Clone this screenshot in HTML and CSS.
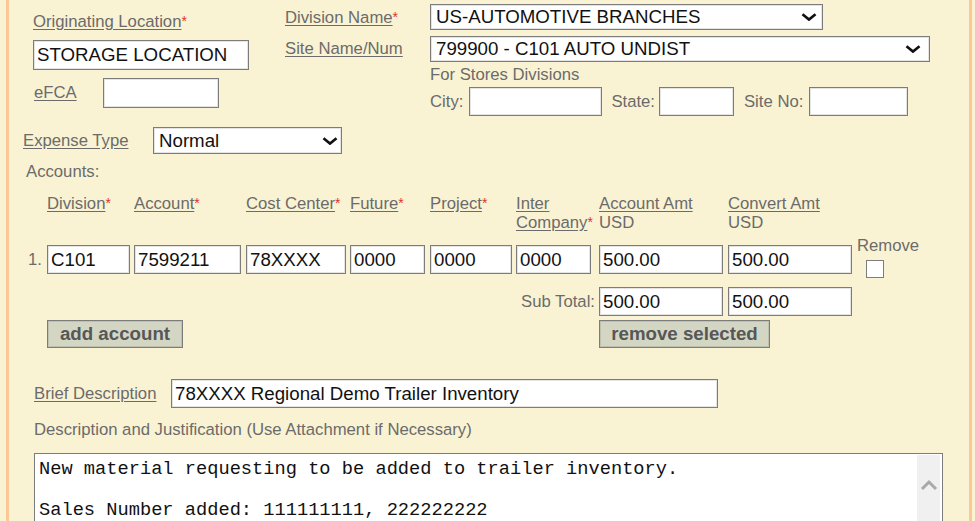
FILE: index.html
```html
<!DOCTYPE html>
<html>
<head>
<meta charset="utf-8">
<title>Request Form</title>
<link rel="stylesheet" href="styles.css">
</head>
<body>
<div class="page">
  <div class="top">
    <div class="left">
      <div class="lbl-line"><span class="lbl">Originating Location</span><span class="req">*</span></div>
      <input class="inp origin" type="text" value="STORAGE LOCATION">
      <div class="efca-row">
        <span class="lbl efca-lbl">eFCA</span>
        <input class="inp efca" type="text" value="">
      </div>
    </div>
    <div class="right">
      <div class="rgrid">
        <div class="lbl-line"><span class="lbl">Division Name</span><span class="req">*</span></div>
        <div class="select sel-div"><span>US-AUTOMOTIVE BRANCHES</span><svg class="chev" width="16" height="8" viewBox="0 0 16 8"><path d="M1.5 1.2 L8 6.6 L14.5 1.2" fill="none" stroke="#111" stroke-width="2.6"/></svg></div>
        <div class="lbl-line"><span class="lbl">Site Name/Num</span></div>
        <div class="select sel-site"><span>799900 - C101 AUTO UNDIST</span><svg class="chev" width="16" height="8" viewBox="0 0 16 8"><path d="M1.5 1.2 L8 6.6 L14.5 1.2" fill="none" stroke="#111" stroke-width="2.6"/></svg></div>
      </div>
      <div class="stores">
        <div class="plain-line">For Stores Divisions</div>
        <div class="city-row">
          <span class="txt city-l">City:</span><input class="inp city" type="text" value="">
          <span class="txt state-l">State:</span><input class="inp state" type="text" value="">
          <span class="txt site-l">Site No:</span><input class="inp siteno" type="text" value="">
        </div>
      </div>
    </div>
  </div>

  <div class="expense">
    <span class="lbl exp-lbl">Expense Type</span>
    <div class="select sel-exp"><span>Normal</span><svg class="chev" width="16" height="8" viewBox="0 0 16 8"><path d="M1.5 1.2 L8 6.6 L14.5 1.2" fill="none" stroke="#111" stroke-width="2.6"/></svg></div>
  </div>

  <div class="plain-line accounts-title">Accounts:</div>

  <div class="acct-grid">
    <div class="hcell c2"><span class="lbl">Division</span><span class="req">*</span></div>
    <div class="hcell c3"><span class="lbl">Account</span><span class="req">*</span></div>
    <div class="hcell c4"><span class="lbl">Cost Center</span><span class="req">*</span></div>
    <div class="hcell c5"><span class="lbl">Future</span><span class="req">*</span></div>
    <div class="hcell c6"><span class="lbl">Project</span><span class="req">*</span></div>
    <div class="hcell c7"><span class="lbl">Inter</span><br><span class="lbl">Company</span><span class="req">*</span></div>
    <div class="hcell c8"><span class="lbl">Account Amt</span><br>USD</div>
    <div class="hcell c9"><span class="lbl">Convert Amt</span><br>USD</div>

    <div class="rownum">1.</div>
    <input class="inp r2 c2 a-div" type="text" value="C101">
    <input class="inp r2 c3 a-acc" type="text" value="7599211">
    <input class="inp r2 c4 a-cc" type="text" value="78XXXX">
    <input class="inp r2 c5 a-fut" type="text" value="0000">
    <input class="inp r2 c6 a-proj" type="text" value="0000">
    <input class="inp r2 c7 a-ic" type="text" value="0000">
    <input class="inp r2 c8 a-amt" type="text" value="500.00">
    <input class="inp r2 c9 a-amt" type="text" value="500.00">
    <div class="remove-cell">
      <div class="remove-lbl">Remove</div>
      <div class="checkbox"></div>
    </div>

    <div class="subtotal-lbl">Sub Total:</div>
    <input class="inp r3 c8 a-amt" type="text" value="500.00">
    <input class="inp r3 c9 a-amt" type="text" value="500.00">

    <button class="btn add-btn" type="button">add account</button>
    <button class="btn rem-btn" type="button">remove selected</button>
  </div>

  <div class="brief">
    <span class="lbl brief-lbl">Brief Description</span>
    <input class="inp brief-inp" type="text" value="78XXXX Regional Demo Trailer Inventory">
  </div>

  <div class="plain-line desc-title">Description and Justification (Use Attachment if Necessary)</div>

  <div class="textarea">
    <div class="ta-text">New material requesting to be added to trailer inventory.

Sales Number added: 111111111, 222222222</div>
    <div class="ta-scroll">
      <svg width="18" height="12" viewBox="0 0 18 12"><path d="M2 10 L9 3 L16 10" fill="none" stroke="#a9a9a9" stroke-width="3"/></svg>
    </div>
  </div>
</div>
</body>
</html>
```

FILE: styles.css
```css
* { box-sizing: border-box; }

html, body {
  margin: 0;
  padding: 0;
  background: #faf3d3;
}

body {
  width: 975px;
  height: 521px;
  overflow: hidden;
  font-family: "Liberation Sans", Arial, sans-serif;
  font-size: 16.7px;
  color: #6b6b6b;
}

.page {
  margin-left: 6px;
  width: 966px;
  height: 521px;
  border-left: 3px solid #fcc897;
  border-right: 3px solid #fcc897;
  background: #faf3d3;
  overflow: hidden;
}

.lbl {
  text-decoration: underline;
  text-underline-offset: 2px;
  color: #6b6b6b;
}

.req {
  color: #e2302c;
  font-size: 14px;
  vertical-align: 1px;
}

.lbl-line, .plain-line {
  line-height: 20px;
  height: 20px;
  white-space: nowrap;
}

.inp {
  display: block;
  margin: 0;
  height: 29px;
  border: 1px solid #7c7c7c;
  box-shadow: inset 0 0 0 1px #e4e4e4;
  background: #fff;
  font-family: "Liberation Sans", Arial, sans-serif;
  font-size: 18.7px;
  color: #111;
  padding: 0 3px;
  outline: none;
}

.select {
  display: flex;
  align-items: center;
  justify-content: space-between;
  height: 26px;
  border: 1px solid #7c7c7c;
  box-shadow: inset 0 0 0 1px #e4e4e4;
  background: #fff;
  font-size: 18.7px;
  color: #111;
  padding: 0 5px 0 5px;
  white-space: nowrap;
}

.chev { flex: none; }

/* top section */
.top {
  display: flex;
  padding-left: 24px;
}

.left {
  width: 252px;
  padding-top: 11px;
}

.origin {
  margin-top: 9px;
  width: 216px;
  height: 30px;
}

.efca-row {
  display: flex;
  align-items: center;
  margin-top: 8px;
}

.efca-lbl {
  width: 70px;
  padding-left: 1px;
}

.efca {
  width: 116px;
  height: 30px;
}

.right {
  padding-top: 4px;
}

.rgrid {
  display: grid;
  grid-template-columns: 145px auto;
  row-gap: 6px;
  align-items: center;
}

.sel-div { width: 393px; }
.sel-site { width: 500px; padding-right: 8px; }

.stores {
  margin-left: 145px;
  margin-top: 3px;
}

.city-row {
  display: flex;
  align-items: center;
  margin-top: 2px;
}

.txt { white-space: nowrap; }

.city-l { margin-right: 6px; }
.city { width: 133px; margin-right: 9px; }
.state-l { margin-right: 4px; }
.state { width: 75px; margin-right: 10px; }
.site-l { margin-right: 6px; }
.siteno { width: 99px; }

/* expense */
.expense {
  display: flex;
  align-items: center;
  margin-top: 11px;
  padding-left: 14px;
}

.exp-lbl { width: 130px; }

.sel-exp {
  width: 189px;
  height: 27px;
  padding-left: 5px;
  padding-right: 3px;
}

.accounts-title {
  margin-top: 8px;
  padding-left: 17px;
}

/* accounts grid */
.acct-grid {
  margin-top: 12px;
  padding-left: 19px;
  display: grid;
  grid-template-columns: 19px 87px 112px 104px 80px 86px 83px 129px 129px 60px;
  grid-template-rows: 51px 42px 33px 28px;
  align-items: start;
}

.hcell {
  line-height: 19px;
  white-space: nowrap;
  grid-row: 1;
}

.r2 { grid-row: 2; }
.r3 { grid-row: 3; }

.c2 { grid-column: 2; }
.c3 { grid-column: 3; }
.c4 { grid-column: 4; }
.c5 { grid-column: 5; }
.c6 { grid-column: 6; }
.c7 { grid-column: 7; }
.c8 { grid-column: 8; }
.c9 { grid-column: 9; }

.rownum {
  grid-row: 2;
  grid-column: 1;
  line-height: 29px;
}

.a-div { width: 83px; }
.a-acc { width: 107px; }
.a-cc { width: 100px; }
.a-fut { width: 75px; }
.a-proj { width: 82px; }
.a-ic { width: 75px; }
.a-amt { width: 124px; }

.remove-cell {
  grid-row: 2;
  grid-column: 10;
  margin-top: -7px;
}

.remove-lbl {
  line-height: 16px;
}

.checkbox {
  margin-top: 6px;
  margin-left: 9px;
  width: 18px;
  height: 18px;
  border: 1px solid #7d7d7d;
  background: #fff;
}

.subtotal-lbl {
  grid-row: 3;
  grid-column: 2 / 8;
  justify-self: end;
  margin-right: 4px;
  line-height: 29px;
}

.btn {
  grid-row: 4;
  height: 28px;
  margin: 0;
  padding: 0;
  background: #d4d6c4;
  border: 1px solid #7c7c7c;
  box-shadow: inset 0 0 0 1px #bfc1b0;
  font-family: "Liberation Sans", Arial, sans-serif;
  font-weight: bold;
  font-size: 18.7px;
  color: #575757;
}

.add-btn {
  grid-column: 2 / 5;
  width: 136px;
}

.rem-btn {
  grid-column: 8 / 10;
  width: 171px;
}

/* brief */
.brief {
  display: flex;
  align-items: center;
  margin-top: 31px;
  padding-left: 25px;
}

.brief-lbl { width: 137px; }

.brief-inp {
  width: 547px;
}

.desc-title {
  margin-top: 12px;
  padding-left: 25px;
}

.textarea {
  display: flex;
  margin-top: 13px;
  margin-left: 25px;
  width: 909px;
  height: 90px;
  border: 1px solid #7c7c7c;
  border-bottom: none;
  background: #fff;
}

.ta-text {
  flex: 1;
  padding: 5px 4px;
  font-family: "Liberation Mono", "Courier New", monospace;
  font-size: 18.7px;
  line-height: 20.5px;
  color: #111;
  white-space: pre;
}

.ta-scroll {
  width: 23px;
  margin-right: 2px;
  margin-top: 1px;
  background: #f0f0f0;
  padding-top: 24px;
  display: flex;
  justify-content: center;
  align-items: flex-start;
}
```
